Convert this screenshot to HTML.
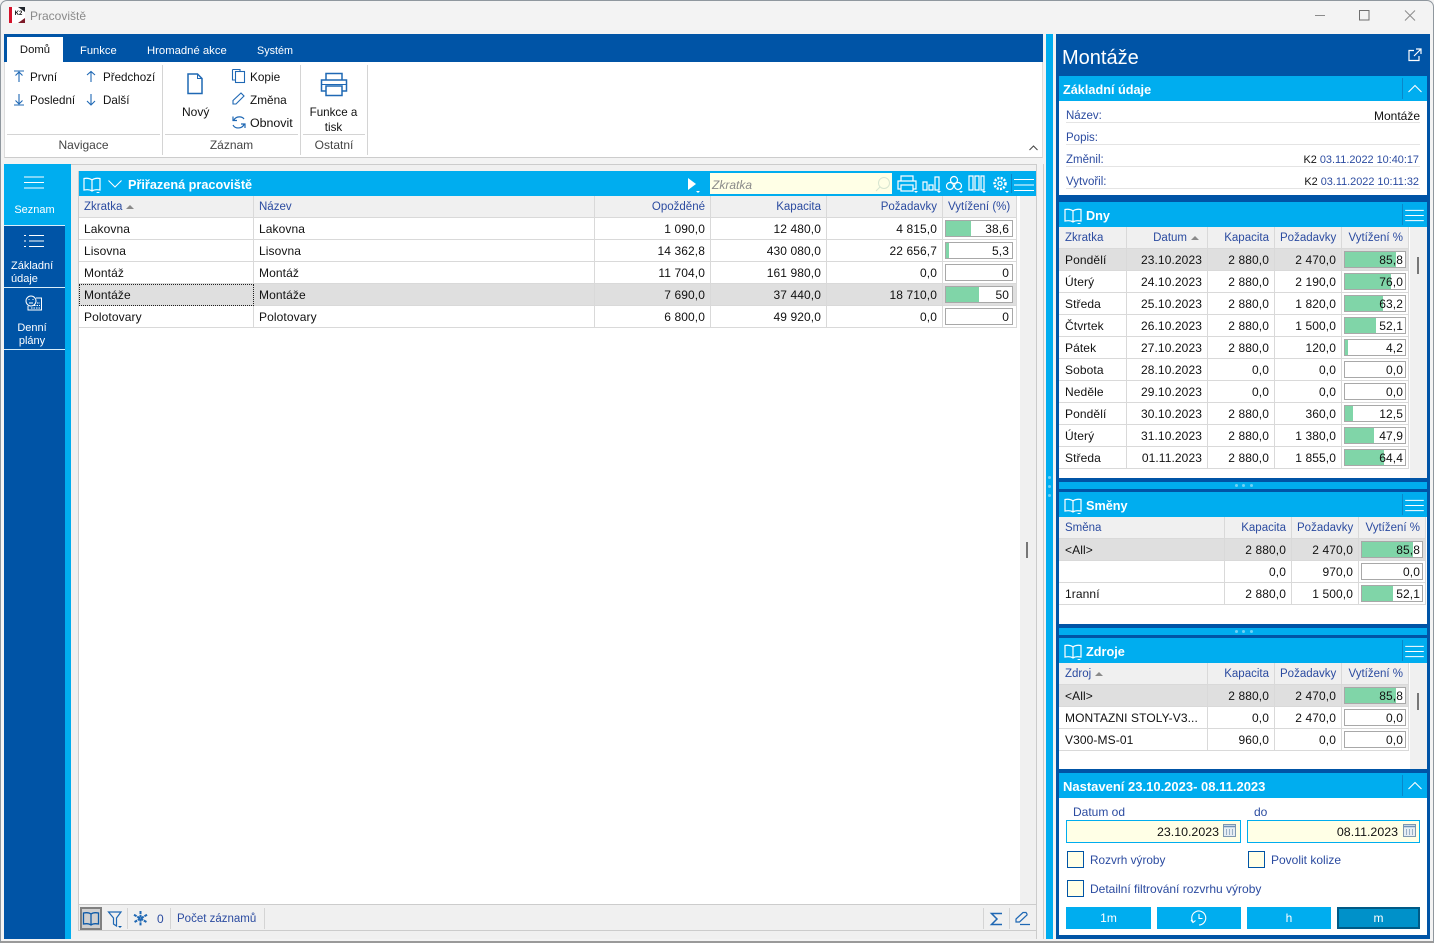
<!DOCTYPE html>
<html lang="cs"><head><meta charset="utf-8"><title>Pracoviště</title>
<style>
*{box-sizing:border-box}
html,body{margin:0;padding:0}
body{width:1434px;height:943px;overflow:hidden;background:#f3f3f3;font:12px/14px "Liberation Sans",sans-serif;color:#111;position:relative}
.a{position:absolute}
.t{position:absolute;white-space:nowrap}
.r{text-align:right}
.c{text-align:center}
.w{color:#fff}
.b{color:#2b4ba0}
.hd{position:absolute;background:#00adef;color:#fff;font-weight:bold;height:25px;line-height:28px;font-size:12.700px}
table{position:absolute;border-collapse:separate;border-spacing:0;table-layout:fixed;background:#fff}
td,th{height:22px;padding:0 5px;border-right:1px solid #d9d9d9;border-bottom:1px solid #d9d9d9;font-weight:normal;font-size:12px;text-align:right;white-space:nowrap;overflow:hidden}
td{padding-top:1px;letter-spacing:.1px}
th{background:#f0f0f0;color:#2b4ba0;font-size:11.500px;padding-top:1px}
td.l,th.l{text-align:left}
.rg td.l,.rg th.l{padding-left:6px}
tr.s td{background:#dfdfdf}
td.v{padding:0;position:relative}
.bar{position:absolute;left:2px;top:2px;right:2px;height:17px;border:1px solid #a8a8a8;background:#fff;text-align:right;padding-right:2px;line-height:17px}
.mg .bar{right:3px;padding-right:3px}
.bar i{position:absolute;left:0;top:0;bottom:0;background:#80d5a8}
.bar span{position:relative}
.tri{display:inline-block;width:0;height:0;border-left:4px solid transparent;border-right:4px solid transparent;border-bottom:4px solid #8a8a8a;margin-left:4px;vertical-align:1px}
svg{position:absolute;overflow:visible;fill:none}
.sep{position:absolute;background:#d4d4d4}
.btn{position:absolute;top:907px;height:22px;background:#00adef;color:#fff;text-align:center;line-height:22px}
.cb{position:absolute;width:17px;height:17px;background:#ffffe6;border:1px solid #0054a6}
.inp{position:absolute;height:23px;top:820px;background:#ffffe6;border:1px solid #00adef;text-align:right;line-height:22px;padding-right:21px;font-size:12.400px}
.dots{position:absolute;width:3px;height:3px;border-radius:50%;background:#6fd0f5}
.rb{font-size:11.600px}
.sm{font-size:11.500px}
</style></head><body>
<svg width="0" height="0" style="position:absolute">
<symbol id="book" viewBox="0 0 18 16"><path d="M9 3C7 1.500 4 1 1 1.500V13C4 12.500 7 12.500 9 14C11 12.500 14 12.500 17 13V1.500C14 1 11 1.500 9 3ZM9 3V14" stroke="currentColor" stroke-width="1.200"/><path d="M13 15h4l-2 1.500z" fill="currentColor"/></symbol>
<symbol id="ham" viewBox="0 0 20 14"><path d="M0 1.500H20M0 7H20M0 12.500H20" stroke="currentColor" stroke-width="1.100"/></symbol>
<symbol id="cal" viewBox="0 0 13 13"><rect x=".5" y=".5" width="12" height="12" fill="#e6edf3" stroke="#7d97b0"/><path d="M.5 2.500H12.500" stroke="#6d93b8" stroke-width="1.500"/><path d="M3 6h1M6 6h1M9 6h1M3 8h1M6 8h1M9 8h1M3 10h1M6 10h1M9 10h1" stroke="#4d7399"/></symbol>
</svg>

<!-- window frame -->
<div class="a" style="left:0;top:0;width:1434px;height:943px;border:1px solid #8f979e;border-bottom:2px solid #9a9a9a;border-radius:7px 7px 0 0"></div>
<svg style="left:9px;top:7px" width="16" height="16"><rect x="0" y="0" width="16" height="16" fill="#fff"/><rect x="0" y="0" width="3" height="16" fill="#d4122a"/><path d="M9 0H16V5z" fill="#22262c"/><path d="M9 16L16 11V16z" fill="#7d1a28"/></svg>
<div class="t" style="left:12px;top:10px;width:13px;text-align:center;font-size:6px;line-height:8px;font-weight:bold;color:#111">K2</div>
<div class="t" style="left:30px;top:9px;color:#8a8a8a">Pracoviště</div>
<svg style="left:1314px;top:9px" width="110" height="14"><path d="M1 6.500H11" stroke="#8b8b8b"/><rect x="45.500" y="1.500" width="9.500" height="9.500" stroke="#6f6f6f"/><path d="M91 1.500L101 11.500M101 1.500L91 11.500" stroke="#8b8b8b"/></svg>

<!-- ribbon -->
<div class="a" style="left:4px;top:34px;width:1039px;height:28px;background:#0054a6"></div>
<div class="a c" style="left:7px;top:37px;width:56px;height:25px;background:#fff;line-height:27px;font-size:11.300px">Domů</div>
<div class="t w" style="left:80px;top:44px;font-size:11.200px">Funkce</div>
<div class="t w" style="left:147px;top:44px;font-size:11.300px">Hromadné akce</div>
<div class="t w" style="left:257px;top:44px;font-size:10.800px">Systém</div>
<div class="a" style="left:4px;top:62px;width:1039px;height:96px;background:#fff;border-bottom:1px solid #ccc;border-left:1px solid #ddd;border-right:1px solid #ddd"></div>
<div class="sep" style="left:162px;top:65px;width:1px;height:90px"></div>
<div class="sep" style="left:300px;top:65px;width:1px;height:90px"></div>
<div class="sep" style="left:367px;top:65px;width:1px;height:90px"></div>
<div class="sep" style="left:7px;top:134px;width:153px;height:1px"></div>
<div class="sep" style="left:165px;top:134px;width:133px;height:1px"></div>
<div class="sep" style="left:303px;top:134px;width:62px;height:1px"></div>
<div class="t rb" style="left:30px;top:71px">První</div>
<div class="t rb" style="left:103px;top:71px">Předchozí</div>
<div class="t rb" style="left:30px;top:94px">Poslední</div>
<div class="t rb" style="left:103px;top:94px">Další</div>
<svg style="left:14px;top:70px" width="90" height="38" stroke="#1f68b4" stroke-width="1.100"><path d="M0 1H10M5 12V2M1.500 5.500L5 2L8.500 5.500"/><path d="M73 5L77 1.500L81 5M77 2V12"/><path d="M0 35H10M5 24V34M1.500 30.500L5 34L8.500 30.500"/><path d="M73 31L77 35L81 31M77 24V34"/></svg>
<svg style="left:187px;top:73px" width="16" height="22" stroke="#1f68b4" stroke-width="1.500"><path d="M1 1H10.500L15 5.500V20.500H1Z"/><path d="M10.500 1V5.500H15" stroke-width="1"/></svg>
<div class="t" style="left:182px;top:105px">Nový</div>
<div class="t" style="left:250px;top:70px;font-size:11.800px">Kopie</div>
<div class="t" style="left:250px;top:93px;font-size:11.800px">Změna</div>
<div class="t" style="left:250px;top:116px;font-size:12.400px">Obnovit</div>
<svg style="left:232px;top:69px" width="14" height="62" stroke="#1f68b4" stroke-width="1.100"><path d="M.5 .5H8V2M.5 .5V11H3"/><rect x="3.500" y="2.500" width="9" height="11"/><path d="M1 35L1 31.500L9 24L12 27L4 35Z"/><path d="M12 50C10 47 4 47 2 51M1 47.500V51.500H5M1 56C3 60 10 60 12 55.500M13 59V55H9" stroke-width="1.200"/></svg>
<svg style="left:320px;top:72px" width="28" height="26" stroke="#1f68b4" stroke-width="1.500"><path d="M6 8V1.500H22V8M6 19H1.500V8H26.500V19H22"/><rect x="6" y="14" width="16" height="9.500"/><path d="M1.500 12.500H26.500" stroke-width="1"/></svg>
<div class="t c" style="left:303px;top:105px;width:61px;line-height:15px;font-size:11.600px">Funkce a<br>tisk</div>
<div class="t c" style="left:7px;top:138px;width:153px;color:#444">Navigace</div>
<div class="t c" style="left:165px;top:138px;width:133px;color:#444">Záznam</div>
<div class="t c" style="left:303px;top:138px;width:62px;color:#444">Ostatní</div>
<svg style="left:1029px;top:145px" width="9" height="6" stroke="#444"><path d="M.5 5L4.500 1L8.500 5"/></svg>

<!-- main area -->
<div class="a" style="left:71px;top:164px;width:965px;height:775px;background:#f0f0f0;border-top:1px solid #ccc"></div>
<div class="a" style="left:4px;top:164px;width:61px;height:775px;background:#0054a6"></div>
<div class="a" style="left:65px;top:164px;width:6px;height:775px;background:#00adef"></div>
<div class="a" style="left:4px;top:164px;width:61px;height:61px;background:#00adef"></div>
<div class="a" style="left:4px;top:225px;width:61px;height:1px;background:#d8eefa"></div>
<div class="a" style="left:4px;top:287px;width:61px;height:1px;background:#d8eefa"></div>
<div class="a" style="left:4px;top:349px;width:61px;height:1px;background:#d8eefa"></div>
<svg style="left:24px;top:174px;color:#fff" width="20" height="17"><use href="#ham"/></svg>
<div class="t w c" style="left:4px;top:203px;width:61px;font-size:11px">Seznam</div>
<svg style="left:24px;top:234px" width="20" height="14" stroke="#fff"><path d="M0 1.500H2M0 7H2M0 12.500H2M5 1.500H20M5 7H20M5 12.500H20"/></svg>
<div class="t w" style="left:11px;top:260px;font-size:11px;line-height:13px">Základní<br>údaje</div>
<svg style="left:25px;top:295px" width="18" height="17" stroke="#fff"><circle cx="6" cy="6" r="5"/><path d="M4 8H8M3.500 4.500h1M7.500 4.500h1M11 3H16.500V15H3V11"/><path d="M6 13H15M9 10.500H15M12 8H15" stroke-dasharray="1.500 1"/></svg>
<div class="t w c" style="left:4px;top:322px;width:56px;font-size:11px;line-height:13px">Denní<br>plány</div>

<div class="a" style="left:79px;top:171px;width:957px;height:733px;background:#fff"></div>
<div class="a" style="left:1020px;top:196px;width:16px;height:708px;background:#f0f0f0"></div>
<div class="a" style="left:1026px;top:542px;width:2px;height:16px;background:#777"></div>
<div class="a" style="left:78px;top:171px;width:1px;height:760px;background:#ccc"></div>
<div class="hd" style="left:79px;top:171px;width:957px"></div>
<svg style="left:83px;top:177px;color:#fff" width="18" height="16"><use href="#book"/></svg>
<svg style="left:108px;top:180px" width="14" height="8" stroke="#fff" stroke-width="1.100"><path d="M.5 .5L7 7L13.500 .5"/></svg>
<div class="t w" style="left:128px;top:178px;font-weight:bold;font-size:12.700px">Přiřazená pracoviště</div>
<svg style="left:688px;top:178px" width="14" height="15" fill="#fff"><path d="M0 0L8 6L0 12Z" fill="#fff"/><path d="M8 13h4l-2 2z" fill="#fff"/></svg>
<div class="a" style="left:710px;top:173px;width:182px;height:21px;background:#ffffe6"></div>
<div class="t" style="left:712px;top:178px;color:#8a8a8a;font-style:italic">Zkratka</div>
<svg style="left:875px;top:177px" width="15" height="15" stroke="#d7e5d0"><circle cx="9" cy="6" r="5.500"/><path d="M5 10L1 14"/></svg>
<svg style="left:897px;top:175px" width="120" height="20" stroke="#fff" stroke-width="1.200"><path d="M4 6V1H16V6M4 14H1V6H19V14H16"/><rect x="4" y="10" width="12" height="6"/><path d="M17 16h4l-2 2z" fill="#fff" stroke="none"/>
<path d="M26 7h4v8h-4zM32 10h4v5h-4zM38 2h4v13h-4z"/><path d="M40 16h4l-2 2z" fill="#fff" stroke="none"/>
<circle cx="57" cy="5" r="3.500"/><circle cx="53" cy="11" r="3.500"/><circle cx="61" cy="11" r="3.500"/><path d="M62 16h4l-2 2z" fill="#fff" stroke="none"/>
<path d="M72 1h4v14h-4zM78 1h4v14h-4zM84 1h3v14h-3z"/><path d="M85 16h4l-2 2z" fill="#fff" stroke="none"/>
<circle cx="103" cy="8.500" r="2"/><circle cx="103" cy="8.500" r="5.500" stroke-width="2.500" stroke-dasharray="2 1.300"/><path d="M108 16h4l-2 2z" fill="#fff" stroke="none"/></svg>
<div class="a" style="left:1011px;top:174px;width:1px;height:19px;background:#0a87c9"></div>
<svg style="left:1014px;top:178px;color:#fff" width="20" height="14"><use href="#ham"/></svg>

<table class="mg" style="left:79px;top:196px;width:938px"><colgroup><col style="width:175px"><col style="width:341px"><col style="width:116px"><col style="width:116px"><col style="width:116px"><col style="width:74px"></colgroup>
<tr><th class="l">Zkratka<span class="tri"></span></th><th class="l">Název</th><th>Opožděné</th><th>Kapacita</th><th>Požadavky</th><th style="padding-right:6px">Vytížení (%)</th></tr>
<tr><td class="l">Lakovna</td><td class="l">Lakovna</td><td>1 090,0</td><td>12 480,0</td><td>4 815,0</td><td class="v"><div class="bar"><i style="width:38.6%"></i><span>38,6</span></div></td></tr>
<tr><td class="l">Lisovna</td><td class="l">Lisovna</td><td>14 362,8</td><td>430 080,0</td><td>22 656,7</td><td class="v"><div class="bar"><i style="width:5.300%"></i><span>5,3</span></div></td></tr>
<tr><td class="l">Montáž</td><td class="l">Montáž</td><td>11 704,0</td><td>161 980,0</td><td>0,0</td><td class="v"><div class="bar"><span>0</span></div></td></tr>
<tr class="s"><td class="l" style="outline:1px dotted #222;outline-offset:-1px">Montáže</td><td class="l">Montáže</td><td>7 690,0</td><td>37 440,0</td><td>18 710,0</td><td class="v"><div class="bar"><i style="width:50%"></i><span>50</span></div></td></tr>
<tr><td class="l">Polotovary</td><td class="l">Polotovary</td><td>6 800,0</td><td>49 920,0</td><td>0,0</td><td class="v"><div class="bar"><span>0</span></div></td></tr>
</table>

<!-- status bar -->
<div class="a" style="left:79px;top:904px;width:957px;height:27px;background:#f0f0f0;border-top:1px solid #ccc;border-bottom:1px solid #ccc"></div>
<div class="a" style="left:80px;top:907px;width:22px;height:23px;background:#cfcfcf;border:2px solid #808080"></div>
<svg style="left:82px;top:911px;color:#0d5aa8" width="18" height="15"><path d="M9 3C7 1.500 4 1.500 1.500 2V13C4 12.500 7 12.500 9 14C11 12.500 14 12.500 16.500 13V2C14 1.500 11 1.500 9 3ZM9 3V14" stroke="#0d5aa8" stroke-width="1.300"/></svg>
<svg style="left:108px;top:911px" width="18" height="18" stroke="#1f68b4" stroke-width="1.200"><path d="M.5 1H13L8.500 7V15L5.500 13V7Z"/><path d="M10 15h4l-2 2z" fill="#0d5aa8" stroke="none"/></svg>
<div class="sep" style="left:127px;top:908px;width:1px;height:21px"></div>
<svg style="left:133px;top:911px" width="15" height="15" stroke="#1f68b4" stroke-width="2"><path d="M7.500 0V15M1 3.700L14 11.300M14 3.700L1 11.300" stroke-dasharray="3 .8"/></svg>
<div class="t b" style="left:157px;top:912px">0</div>
<div class="sep" style="left:170px;top:908px;width:1px;height:21px"></div>
<div class="t b sm" style="left:177px;top:912px">Počet záznamů</div>
<div class="sep" style="left:264px;top:908px;width:1px;height:21px"></div>
<div class="sep" style="left:983px;top:908px;width:1px;height:21px"></div>
<div class="sep" style="left:1009px;top:908px;width:1px;height:21px"></div>
<svg style="left:990px;top:912px" width="13" height="14" stroke="#1f68b4" stroke-width="1.500"><path d="M12 1.500H1.500L7 7L1.500 12.500H12"/></svg>
<svg style="left:1015px;top:911px" width="16" height="15" stroke="#1f68b4" stroke-width="1.200"><path d="M1 11V8L8 1.500L11 1.500L12 3L12 4L4.500 11ZM5 13.500H15"/></svg>

<div class="a" style="left:1036px;top:164px;width:1px;height:775px;background:#ccc"></div>
<div class="a" style="left:1043px;top:164px;width:1px;height:775px;background:#ccc"></div>
<div class="a" style="left:1046px;top:34px;width:7px;height:905px;background:#00adef"></div>
<div class="dots" style="left:1048px;top:476px"></div><div class="dots" style="left:1048px;top:485px"></div><div class="dots" style="left:1048px;top:494px"></div>

<!-- right panel -->
<div class="a" style="left:1056px;top:34px;width:374px;height:905px;background:#0054a6"></div>
<div class="t w" style="left:1062px;top:46px;font-size:20px;line-height:24px">Montáže</div>
<svg style="left:1408px;top:48px" width="14" height="14" stroke="#fff" stroke-width="1.200"><path d="M6 2.500H1V12.500H11V8M6 8L12.500 1.500M8 1H13V6"/></svg>

<div class="a" style="left:1059px;top:101px;width:368px;height:94px;background:#fff"></div>
<div class="hd" style="left:1059px;top:76px;width:368px;padding-left:4px">Základní údaje</div>
<div class="a" style="left:1402px;top:78px;width:1px;height:21px;background:#0a87c9"></div>
<svg style="left:1408px;top:85px" width="14" height="8" stroke="#fff" stroke-width="1.100"><path d="M.5 7L7 .5L13.500 7"/></svg>
<div class="a" style="left:1066px;top:122px;width:354px;height:1px;background:#e4e4e4"></div>
<div class="a" style="left:1066px;top:144px;width:354px;height:1px;background:#e4e4e4"></div>
<div class="a" style="left:1066px;top:166px;width:354px;height:1px;background:#e4e4e4"></div>
<div class="a" style="left:1066px;top:188px;width:354px;height:1px;background:#e4e4e4"></div>
<div class="t b" style="left:1066px;top:109px;font-size:11.500px">Název:</div>
<div class="t" style="right:14px;top:109px">Montáže</div>
<div class="t b" style="left:1066px;top:131px;font-size:11.500px">Popis:</div>
<div class="t b" style="left:1066px;top:153px;font-size:11.500px">Změnil:</div>
<div class="t" style="right:15px;top:153px;font-size:10.900px"><span>K2</span> <span class="b">03.11.2022 10:40:17</span></div>
<div class="t b" style="left:1066px;top:175px;font-size:11.500px">Vytvořil:</div>
<div class="t" style="right:15px;top:175px;font-size:10.900px"><span>K2</span> <span class="b">03.11.2022 10:11:32</span></div>

<!-- Dny -->
<div class="a" style="left:1059px;top:227px;width:368px;height:251px;background:#fff"></div>
<div class="a" style="left:1410px;top:227px;width:17px;height:251px;background:#f0f0f0"></div>
<div class="a" style="left:1417px;top:257px;width:2px;height:17px;background:#777"></div>
<div class="hd" style="left:1059px;top:202px;width:368px;padding-left:27px">Dny</div>
<svg style="left:1064px;top:208px;color:#fff" width="18" height="16"><use href="#book"/></svg>
<div class="a" style="left:1402px;top:204px;width:1px;height:21px;background:#0a87c9"></div>
<svg style="left:1405px;top:209px;color:#fff" width="19" height="13"><use href="#ham"/></svg>
<table class="rg" style="left:1059px;top:227px;width:350px"><colgroup><col style="width:68px"><col style="width:81px"><col style="width:67px"><col style="width:67px"><col style="width:67px"></colgroup>
<tr><th class="l">Zkratka</th><th style="padding-right:8px">Datum<span class="tri"></span></th><th>Kapacita</th><th>Požadavky</th><th>Vytížení %</th></tr>
<tr class="s"><td class="l">Pondělí</td><td>23.10.2023</td><td>2 880,0</td><td>2 470,0</td><td class="v"><div class="bar"><i style="width:85.8%"></i><span>85,8</span></div></td></tr>
<tr><td class="l">Úterý</td><td>24.10.2023</td><td>2 880,0</td><td>2 190,0</td><td class="v"><div class="bar"><i style="width:76%"></i><span>76,0</span></div></td></tr>
<tr><td class="l">Středa</td><td>25.10.2023</td><td>2 880,0</td><td>1 820,0</td><td class="v"><div class="bar"><i style="width:63.2%"></i><span>63,2</span></div></td></tr>
<tr><td class="l">Čtvrtek</td><td>26.10.2023</td><td>2 880,0</td><td>1 500,0</td><td class="v"><div class="bar"><i style="width:52.1%"></i><span>52,1</span></div></td></tr>
<tr><td class="l">Pátek</td><td>27.10.2023</td><td>2 880,0</td><td>120,0</td><td class="v"><div class="bar"><i style="width:4.200%"></i><span>4,2</span></div></td></tr>
<tr><td class="l">Sobota</td><td>28.10.2023</td><td>0,0</td><td>0,0</td><td class="v"><div class="bar"><span>0,0</span></div></td></tr>
<tr><td class="l">Neděle</td><td>29.10.2023</td><td>0,0</td><td>0,0</td><td class="v"><div class="bar"><span>0,0</span></div></td></tr>
<tr><td class="l">Pondělí</td><td>30.10.2023</td><td>2 880,0</td><td>360,0</td><td class="v"><div class="bar"><i style="width:12.5%"></i><span>12,5</span></div></td></tr>
<tr><td class="l">Úterý</td><td>31.10.2023</td><td>2 880,0</td><td>1 380,0</td><td class="v"><div class="bar"><i style="width:47.9%"></i><span>47,9</span></div></td></tr>
<tr><td class="l">Středa</td><td>01.11.2023</td><td>2 880,0</td><td>1 855,0</td><td class="v"><div class="bar"><i style="width:64.4%"></i><span>64,4</span></div></td></tr>
</table>
<div class="a" style="left:1059px;top:482px;width:368px;height:7px;background:#00adef"></div>
<div class="dots" style="left:1235px;top:484px"></div><div class="dots" style="left:1242px;top:484px"></div><div class="dots" style="left:1250px;top:484px"></div>

<!-- Směny -->
<div class="a" style="left:1059px;top:517px;width:368px;height:107px;background:#fff"></div>
<div class="hd" style="left:1059px;top:492px;width:368px;padding-left:27px">Směny</div>
<svg style="left:1064px;top:498px;color:#fff" width="18" height="16"><use href="#book"/></svg>
<div class="a" style="left:1402px;top:494px;width:1px;height:21px;background:#0a87c9"></div>
<svg style="left:1405px;top:499px;color:#fff" width="19" height="13"><use href="#ham"/></svg>
<table class="rg" style="left:1059px;top:517px;width:367px"><colgroup><col style="width:166px"><col style="width:67px"><col style="width:67px"><col style="width:67px"></colgroup>
<tr><th class="l">Směna</th><th>Kapacita</th><th>Požadavky</th><th>Vytížení %</th></tr>
<tr class="s"><td class="l">&lt;All&gt;</td><td>2 880,0</td><td>2 470,0</td><td class="v"><div class="bar"><i style="width:85.8%"></i><span>85,8</span></div></td></tr>
<tr><td class="l"></td><td>0,0</td><td>970,0</td><td class="v"><div class="bar"><span>0,0</span></div></td></tr>
<tr><td class="l">1ranní</td><td>2 880,0</td><td>1 500,0</td><td class="v"><div class="bar"><i style="width:52.1%"></i><span>52,1</span></div></td></tr>
</table>
<div class="a" style="left:1059px;top:628px;width:368px;height:7px;background:#00adef"></div>
<div class="dots" style="left:1235px;top:630px"></div><div class="dots" style="left:1242px;top:630px"></div><div class="dots" style="left:1250px;top:630px"></div>

<!-- Zdroje -->
<div class="a" style="left:1059px;top:663px;width:368px;height:106px;background:#fff"></div>
<div class="a" style="left:1410px;top:663px;width:17px;height:106px;background:#f0f0f0"></div>
<div class="a" style="left:1417px;top:693px;width:2px;height:17px;background:#777"></div>
<div class="hd" style="left:1059px;top:638px;width:368px;padding-left:27px">Zdroje</div>
<svg style="left:1064px;top:644px;color:#fff" width="18" height="16"><use href="#book"/></svg>
<div class="a" style="left:1402px;top:640px;width:1px;height:21px;background:#0a87c9"></div>
<svg style="left:1405px;top:645px;color:#fff" width="19" height="13"><use href="#ham"/></svg>
<table class="rg" style="left:1059px;top:663px;width:350px"><colgroup><col style="width:149px"><col style="width:67px"><col style="width:67px"><col style="width:67px"></colgroup>
<tr><th class="l">Zdroj<span class="tri"></span></th><th>Kapacita</th><th>Požadavky</th><th>Vytížení %</th></tr>
<tr class="s"><td class="l">&lt;All&gt;</td><td>2 880,0</td><td>2 470,0</td><td class="v"><div class="bar"><i style="width:85.8%"></i><span>85,8</span></div></td></tr>
<tr><td class="l">MONTAZNI STOLY-V3...</td><td>0,0</td><td>2 470,0</td><td class="v"><div class="bar"><span>0,0</span></div></td></tr>
<tr><td class="l">V300-MS-01</td><td>960,0</td><td>0,0</td><td class="v"><div class="bar"><span>0,0</span></div></td></tr>
</table>

<!-- Nastavení -->
<div class="a" style="left:1059px;top:798px;width:368px;height:137px;background:#fff"></div>
<div class="hd" style="left:1059px;top:773px;width:368px;padding-left:4px;font-size:13px">Nastavení 23.10.2023- 08.11.2023</div>
<div class="a" style="left:1402px;top:775px;width:1px;height:21px;background:#0a87c9"></div>
<svg style="left:1408px;top:782px" width="14" height="8" stroke="#fff" stroke-width="1.100"><path d="M.5 7L7 .5L13.500 7"/></svg>
<div class="t b" style="left:1073px;top:805px">Datum od</div>
<div class="t b" style="left:1254px;top:805px">do</div>
<div class="inp" style="left:1066px;width:175px">23.10.2023</div>
<svg style="left:1223px;top:824px" width="13" height="13"><use href="#cal"/></svg>
<div class="inp" style="left:1247px;width:173px">08.11.2023</div>
<svg style="left:1403px;top:824px" width="13" height="13"><use href="#cal"/></svg>
<div class="cb" style="left:1067px;top:851px"></div>
<div class="t b" style="left:1090px;top:853px;font-size:11.800px">Rozvrh výroby</div>
<div class="cb" style="left:1248px;top:851px"></div>
<div class="t b" style="left:1271px;top:853px">Povolit kolize</div>
<div class="cb" style="left:1067px;top:880px"></div>
<div class="t b" style="left:1090px;top:882px">Detailní filtrování rozvrhu výroby</div>
<div class="btn" style="left:1066px;width:85px">1m</div>
<div class="btn" style="left:1157px;width:84px"></div>
<svg style="left:1190px;top:910px" width="17" height="16" stroke="#fff" stroke-width="1.100"><path d="M3 12A7 7 0 1 1 9 15"/><path d="M9 4V8.500H12.500M1 10L3 12.500L5.500 10.500"/></svg>
<div class="btn" style="left:1247px;width:84px">h</div>
<div class="btn" style="left:1337px;width:83px;background:#0091c9;border:2px solid #005a86;line-height:18px">m</div>
</body></html>
